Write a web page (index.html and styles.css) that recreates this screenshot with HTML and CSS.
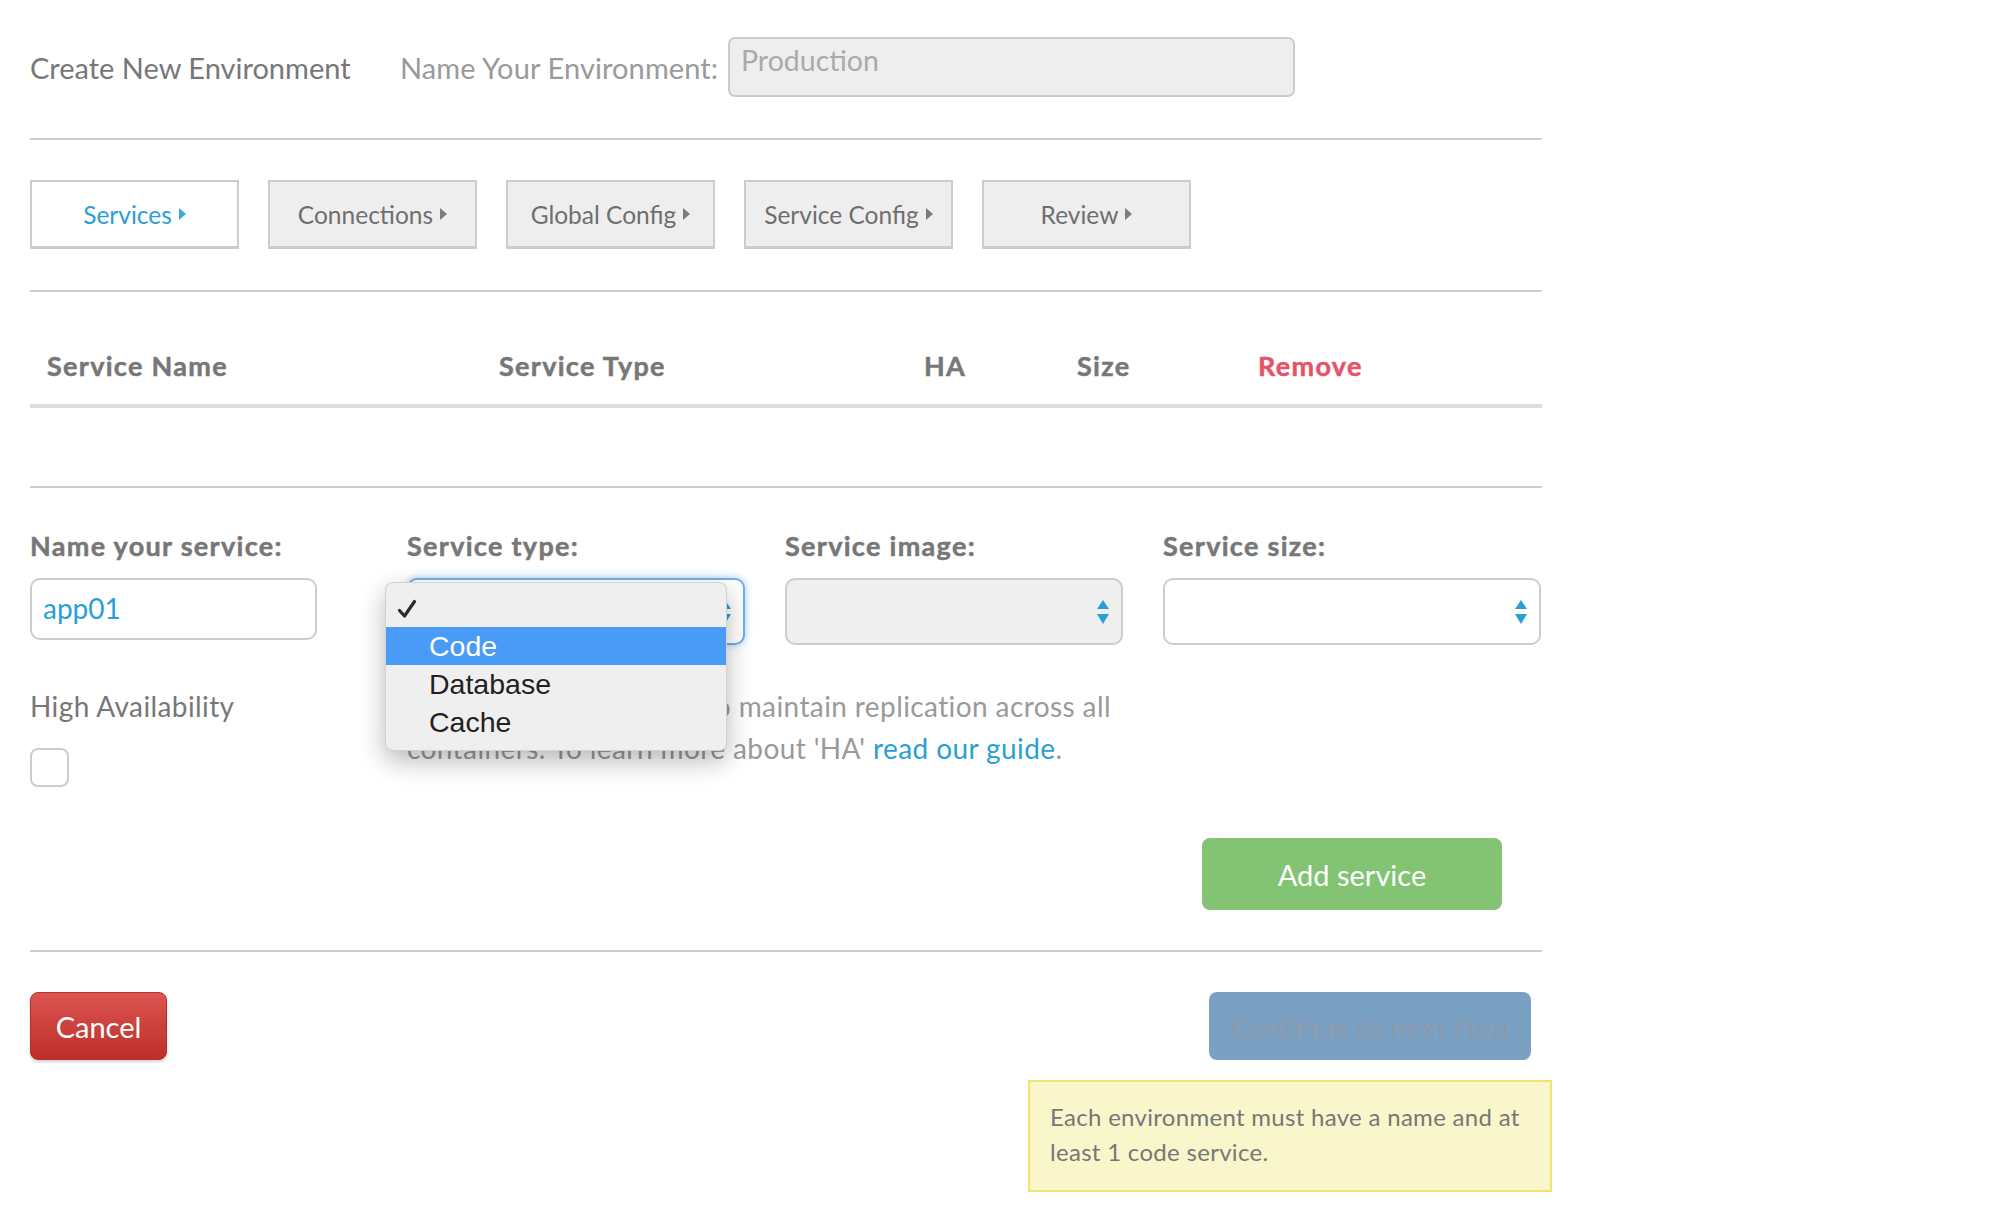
FILE: index.html
```html
<!DOCTYPE html>
<html lang="en">
<head>
<meta charset="utf-8">
<title>Create New Environment</title>
<link rel="stylesheet" href="styles.css">
</head>
<body>
<div class="page">
  <header class="env-head">
    <h1 class="title">Create New Environment</h1>
    <span class="env-label">Name Your Environment:</span>
    <div class="env-input">Production</div>
  </header>
  <hr class="rule rule-head">

  <nav class="steps">
    <div class="step step-active">Services<span class="caret"></span></div>
    <div class="step">Connections<span class="caret"></span></div>
    <div class="step">Global Config<span class="caret"></span></div>
    <div class="step">Service Config<span class="caret"></span></div>
    <div class="step">Review<span class="caret"></span></div>
  </nav>
  <hr class="rule rule-steps">

  <div class="table-head">
    <span>Service Name</span>
    <span>Service Type</span>
    <span>HA</span>
    <span>Size</span>
    <span class="remove">Remove</span>
  </div>
  <div class="table-body"></div>
  <hr class="rule">

  <section class="service-form">
    <div class="field">
      <div class="field-label">Name your service:</div>
      <div class="text-input">app01</div>
    </div>
    <div class="field">
      <div class="field-label">Service type:</div>
      <div class="select select-type select-focus">
        <svg class="updown" width="12" height="24" viewBox="0 0 12 24"><path d="M6 0 L12 9 L0 9 Z M0 14 L12 14 L6 24 Z" fill="#2a9fd6"/></svg>
        <div class="menu">
          <div class="menu-row"><svg class="check" width="20" height="20" viewBox="0 0 20 20"><path d="M2.5 11.5 L7.5 17 L17.5 2.5" fill="none" stroke="#2b2b2b" stroke-width="3.2" stroke-linecap="round" stroke-linejoin="round"/></svg></div>
          <div class="menu-row menu-hl">Code</div>
          <div class="menu-row">Database</div>
          <div class="menu-row">Cache</div>
        </div>
      </div>
    </div>
    <div class="field">
      <div class="field-label">Service image:</div>
      <div class="select select-image">
        <svg class="updown" width="12" height="24" viewBox="0 0 12 24"><path d="M6 0 L12 9 L0 9 Z M0 14 L12 14 L6 24 Z" fill="#2a9fd6"/></svg>
      </div>
    </div>
    <div class="field">
      <div class="field-label">Service size:</div>
      <div class="select select-size">
        <svg class="updown" width="12" height="24" viewBox="0 0 12 24"><path d="M6 0 L12 9 L0 9 Z M0 14 L12 14 L6 24 Z" fill="#2a9fd6"/></svg>
      </div>
    </div>

    <div class="ha-cell">
      <div class="ha-label">High Availability</div>
      <div class="checkbox"></div>
    </div>
    <p class="ha-desc">Enabling 'HA' allows us to maintain replication across all<br>containers. To learn more about 'HA' <a class="link" href="#">read our guide</a>.</p>
  </section>

  <div class="add-row">
    <button class="btn btn-add">Add service</button>
  </div>
  <hr class="rule rule-foot">

  <div class="foot-row">
    <button class="btn btn-cancel">Cancel</button>
    <button class="btn btn-continue">Continue to next step</button>
  </div>
  <div class="note-row">
    <div class="note">Each environment must have a name and at least 1 code service.</div>
  </div>
</div>
</body>
</html>
```
FILE: styles.css
```css
* { box-sizing: border-box; }
html, body { margin: 0; padding: 0; background: #fff; }
body {
  font-family: "Lato", "Open Sans", sans-serif;
  color: #777;
}
.page {
  width: 1542px;
  padding: 37px 0 40px 30px;
}

/* header */
.env-head {
  display: flex;
  align-items: center;
  height: 60px;
}
.title {
  margin: 0;
  font-size: 29px;
  font-weight: 400;
  color: #777;
  width: 370px;
  padding-top: 1px;
}
.env-label {
  font-size: 29px;
  color: #9a9a9a;
  width: 328px;
  padding-top: 1px;
  letter-spacing: 0.1px;
}
.env-input {
  width: 567px;
  height: 60px;
  background: #eee;
  border: 2px solid #ccc;
  border-radius: 7px;
  font-size: 28.5px;
  color: #aaa;
  padding: 0 0 0 11px;
  line-height: 42px;
  align-self: flex-start;
}

.rule {
  border: 0;
  height: 2px;
  background: #ccc;
  margin: 41px 0 0 0;
}

/* steps */
.steps {
  display: flex;
  gap: 29px;
  margin-top: 40px;
}
.step {
  width: 209px;
  height: 69px;
  border: 2px solid #ccc;
  border-bottom-width: 3px;
  background: #eee;
  display: flex;
  align-items: center;
  justify-content: center;
  font-size: 24.5px;
  color: #6f6f6f;
}
.step-active {
  background: #fff;
  color: #2a9fd6;
}
.caret {
  display: inline-block;
  width: 0;
  height: 0;
  margin-left: 7px;
  border-left: 7px solid currentColor;
  border-top: 6.5px solid transparent;
  border-bottom: 6.5px solid transparent;
  opacity: 0.9;
}

/* table head */
.table-head {
  display: grid;
  grid-template-columns: 452px 425px 153px 181px auto;
  padding: 52px 0 16px 17px;
  line-height: 44px;
  font-size: 27px;
  font-weight: 700;
  letter-spacing: 1.3px;
  -webkit-text-stroke: 0.5px currentColor;
  color: #777;
  border-bottom: 4px solid #ddd;
}
.remove { color: #e5536a; }
.table-body { height: 78px; }
.table-body + .rule { margin-top: 0; }

/* form */
.service-form {
  display: grid;
  grid-template-columns: 377px 378px 378px 379px;
  margin-top: 40px;
}
.field-label {
  font-size: 27px;
  font-weight: 700;
  letter-spacing: 1.3px;
  -webkit-text-stroke: 0.5px currentColor;
  line-height: 36px;
  color: #777;
  margin-bottom: 14px;
}
.text-input {
  width: 287px;
  height: 62px;
  margin-top: 1px;
  border: 2px solid #ccc;
  border-radius: 10px;
  font-size: 28px;
  color: #2a9fd6;
  padding: 0 11px;
  line-height: 56px;
}
.select {
  position: relative;
  height: 67px;
  border: 2px solid #ccc;
  border-radius: 10px;
  background: #fff;
}
.select-type { width: 338px; }
.select-image { width: 338px; background: #efefef; }
.select-size { width: 378px; }
.select-focus {
  border-color: #6cb2ea;
  box-shadow: 0 0 7px rgba(80, 160, 230, 0.55);
}
.updown {
  position: absolute;
  right: 12px;
  top: 20px;
}

/* native-like dropdown menu */
.menu {
  position: absolute;
  left: -24px;
  top: 2px;
  width: 342px;
  height: 169px;
  background: #efefef;
  border: 1px solid rgba(0, 0, 0, 0.12);
  border-radius: 8px;
  box-shadow: 0 10px 26px rgba(0, 0, 0, 0.28);
  padding-top: 6px;
  font-family: "Liberation Sans", Arial, sans-serif;
  font-size: 28.5px;
  color: #222;
  z-index: 5;
}
.menu-row {
  height: 38px;
  line-height: 38px;
  padding-left: 43px;
  position: relative;
}
.menu-hl {
  background: #4a9af7;
  color: #fff;
}
.check {
  position: absolute;
  left: 11px;
  top: 10px;
}

/* HA row */
.ha-cell {
  margin-top: 40px;
}
.ha-label {
  font-size: 28px;
  letter-spacing: 0.4px;
  line-height: 42px;
  color: #777;
}
.checkbox {
  width: 39px;
  height: 39px;
  border: 2px solid #ccc;
  border-radius: 8px;
  margin-top: 21px;
}
.ha-desc {
  grid-column: 2 / 5;
  margin: 40px 0 0 0;
  font-size: 28px;
  letter-spacing: 0.4px;
  line-height: 42px;
  color: #9a9a9a;
}
.link {
  color: #2a9fd6;
  text-decoration: none;
}

/* buttons */
.btn {
  font-family: "Lato", "Open Sans", sans-serif;
  border: 0;
  border-radius: 8px;
  font-size: 29px;
  color: #fff;
  padding: 0;
  cursor: pointer;
}
.add-row {
  display: flex;
  justify-content: flex-end;
  padding-right: 40px;
  margin-top: 51px;
}
.btn-add {
  width: 300px;
  height: 72px;
  background: #82c474;
}
.rule-foot { margin-top: 40px; }
.foot-row {
  display: flex;
  justify-content: space-between;
  align-items: center;
  margin-top: 40px;
  padding-right: 11px;
}
.btn-cancel {
  width: 137px;
  height: 68px;
  background: linear-gradient(#db5551, #bf2d28);
  border: 1px solid #b3302b;
  box-shadow: 0 2px 3px rgba(0, 0, 0, 0.18);
}
.btn-continue {
  width: 322px;
  height: 68px;
  background: #7aa0c4;
  color: #8b9aab;
}

/* note */
.note-row {
  display: flex;
  justify-content: flex-end;
  margin-right: -10px;
  margin-top: 20px;
}
.note {
  width: 524px;
  height: 112px;
  background: #faf6cb;
  border: 2px solid #f1e36d;
  padding: 17px 20px 0 20px;
  font-size: 24px;
  letter-spacing: 0.3px;
  line-height: 35px;
  color: #777;
}
```
